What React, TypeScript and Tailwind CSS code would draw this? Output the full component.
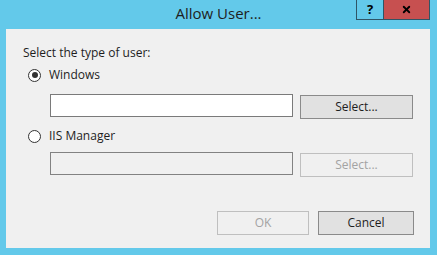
import { X } from "lucide-react";

function Radio({ checked, label }: { checked?: boolean; label: string }) {
  return (
    <div className="flex items-center h-[16px]">
      <div className="flex items-center justify-center w-[13px] h-[13px] rounded-full border border-[#333333] bg-white">
        {checked && <div className="w-[6px] h-[6px] rounded-full bg-[#333333]"></div>}
      </div>
      <span className="ml-[8px] text-[#1e1e1e]">{label}</span>
    </div>
  );
}

function WinButton({
  label,
  disabled,
  className,
}: {
  label: string;
  disabled?: boolean;
  className?: string;
}) {
  return (
    <button
      disabled={disabled}
      className={
        "h-[24px] flex items-center justify-center border text-[12px] " +
        (disabled
          ? "bg-[#f0f0f0] border-[#bfbfbf] text-[#a3a3a3] "
          : "bg-[#e1e1e1] border-[#8a8a8a] text-[#1e1e1e] ") +
        (className ?? "")
      }
    >
      {label}
    </button>
  );
}

export default function App() {
  return (
    <div
      className="w-[437px] h-[255px] bg-[#63c9ea] flex flex-col text-[12px] overflow-hidden"
      style={{ fontFamily: '"Open Sans", "Noto Sans", sans-serif' }}
    >
      <div className="relative h-[29px] flex items-center justify-center">
        <h1 className="text-[15px] text-[#1e1e1e] pb-[2px]">Allow User...</h1>
        <div className="absolute top-0 right-[7px] flex h-[20px] border border-t-0 border-[#2f5566]">
          <div className="w-[27px] flex items-center justify-center font-bold text-[13px] text-black border-r border-[#2f5566]">
            ?
          </div>
          <div className="w-[45px] flex items-center justify-center bg-[#c75050]">
            <X size={11} strokeWidth={4} color="#000" />
          </div>
        </div>
      </div>

      <div className="flex-1 ml-[6px] mr-[7px] mb-[7px] bg-[#f0f0f0] flex flex-col pl-[17px] pr-[16px]">
        <p className="mt-[16px] text-[#1e1e1e] leading-[16px]">Select the type of user:</p>

        <div className="mt-[6px] pl-[5px]">
          <Radio checked label="Windows" />
        </div>
        <div className="mt-[11px] pl-[27px] flex items-start">
          <div className="w-[243px] h-[23px] bg-white border border-[#7a7a7a]"></div>
          <WinButton label="Select..." className="ml-[7px] mt-[1px] w-[113px]" />
        </div>

        <div className="mt-[9px] pl-[5px]">
          <Radio label="IIS Manager" />
        </div>
        <div className="mt-[8px] pl-[27px] flex items-start">
          <div className="w-[243px] h-[23px] bg-[#f0f0f0] border border-[#828282]"></div>
          <WinButton label="Select..." disabled className="ml-[7px] mt-[1px] w-[113px]" />
        </div>

        <div className="mt-[34px] flex justify-end">
          <WinButton label="OK" disabled className="w-[92px]" />
          <WinButton label="Cancel" className="ml-[9px] w-[96px]" />
        </div>
      </div>
    </div>
  );
}
